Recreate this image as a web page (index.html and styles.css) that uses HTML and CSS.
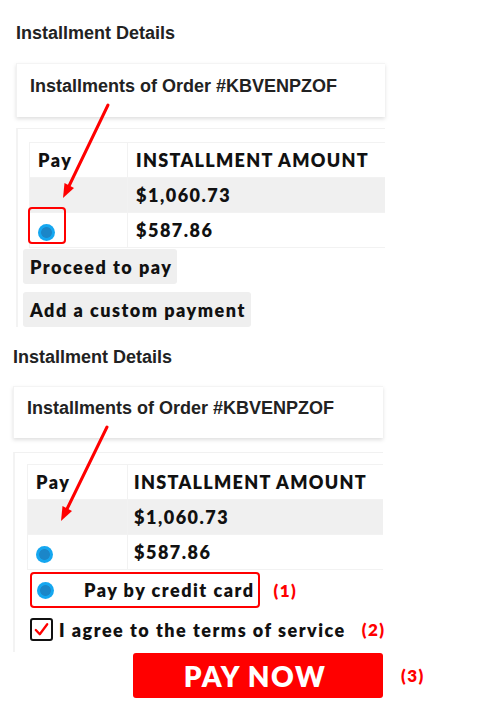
FILE: index.html
```html
<!DOCTYPE html>
<html lang="en">
<head>
<meta charset="utf-8">
<title>Installment Details</title>
<link rel="stylesheet" href="styles.css">
</head>
<body>
<div class="page">
  <section class="block block-a">
    <h2 class="title">Installment Details</h2>
    <div class="card"><h3 class="card-title">Installments of Order #KBVENPZOF</h3></div>
    <div class="panel">
      <table class="inst">
        <thead>
          <tr><th class="c-pay">Pay</th><th class="c-amt">INSTALLMENT AMOUNT</th></tr>
        </thead>
        <tbody>
          <tr class="paid"><td class="c-pay"></td><td class="c-amt">$1,060.73</td></tr>
          <tr><td class="c-pay"><span class="radio"></span><span class="hl"></span></td><td class="c-amt">$587.86</td></tr>
        </tbody>
      </table>
      <div class="btns">
        <button class="btn">Proceed to pay</button>
        <button class="btn">Add a custom payment</button>
      </div>
    </div>
  </section>

  <section class="block block-b">
    <h2 class="title">Installment Details</h2>
    <div class="card"><h3 class="card-title">Installments of Order #KBVENPZOF</h3></div>
    <div class="panel">
      <table class="inst">
        <thead>
          <tr><th class="c-pay">Pay</th><th class="c-amt">INSTALLMENT AMOUNT</th></tr>
        </thead>
        <tbody>
          <tr class="paid"><td class="c-pay"></td><td class="c-amt">$1,060.73</td></tr>
          <tr><td class="c-pay"><span class="radio"></span></td><td class="c-amt">$587.86</td></tr>
        </tbody>
      </table>
      <div class="opt-row">
        <div class="method"><span class="radio"></span><span class="method-label">Pay by credit card</span></div>
        <span class="note">(1)</span>
      </div>
      <div class="agree-row">
        <span class="check"><svg viewBox="0 0 20 20" width="19" height="19"><path d="M4 10.5 L8.2 15 L16 4.5" fill="none" stroke="#f00" stroke-width="2.4" stroke-linecap="round" stroke-linejoin="round"/></svg></span>
        <span class="agree-label">I agree to the terms of service</span>
        <span class="note note-2">(2)</span>
      </div>
    </div>
    <div class="paynow-row">
      <button class="paynow">PAY NOW</button>
      <span class="note note-3">(3)</span>
    </div>
  </section>

  <svg class="arrows" width="484" height="717" viewBox="0 0 484 717">
    <line x1="108" y1="105" x2="69" y2="186" stroke="#f00" stroke-width="3" stroke-linecap="round"/>
    <polygon points="63,198 74,188 64.5,183" fill="#f00"/>
    <line x1="107" y1="427" x2="67" y2="509" stroke="#f00" stroke-width="3" stroke-linecap="round"/>
    <polygon points="61,521 72,511 62.5,506" fill="#f00"/>
  </svg>
</div>
</body>
</html>
```

FILE: styles.css
```css
html, body {
  margin: 0;
  padding: 0;
  background: #fff;
}

.page {
  position: relative;
  width: 484px;
  height: 717px;
  overflow: hidden;
  padding-top: 22px;
  box-sizing: border-box;
}

.block {
  display: flex;
  flex-direction: column;
  align-items: flex-start;
}

.block-a {
  padding-left: 16px;
}

.block-b {
  padding-left: 13px;
  margin-top: 19px;
}

.title {
  margin: 0;
  font-family: "Liberation Sans", Arial, sans-serif;
  font-weight: 700;
  font-size: 18px;
  line-height: 22px;
  color: #222;
}

.card {
  width: 369px;
  box-sizing: border-box;
  margin-top: 19px;
  padding: 11px 13px 20px;
  background: #fff;
  border-top: 1px solid #f4f4f4;
  border-left: 1px solid #f2f2f2;
  box-shadow: 0 2px 4px rgba(0, 0, 0, 0.13);
}

.block-b .card {
  width: 370px;
  margin-top: 18px;
  padding: 10px 13px 19px;
}

.card-title {
  margin: 0;
  font-family: "Liberation Sans", Arial, sans-serif;
  font-weight: 700;
  font-size: 18px;
  line-height: 22px;
  color: #222;
}

.panel {
  width: 369px;
  box-sizing: border-box;
  margin-top: 11px;
  padding: 13px 0 0 5px;
  border-top: 1px solid #f1f1f1;
  border-left: 2px solid #f3f3f3;
  background: #fff;
}

.block-b .panel {
  width: 370px;
  margin-top: 14px;
  padding: 11px 0 11px 12px;
}

.inst {
  border-collapse: collapse;
  margin-left: 6px;
  width: calc(100% - 6px);
  font-family: Lato, "Open Sans", sans-serif;
  font-weight: 800;
  font-size: 18px;
  letter-spacing: 1.5px;
  color: #111;
}

.block-b .inst {
  margin-left: 0;
  width: 100%;
}

.inst th,
.inst td {
  height: 34px;
  padding: 0;
  text-align: left;
  vertical-align: middle;
  border: 1px solid #f2f2f2;
  border-right: none;
  font-weight: 800;
  white-space: nowrap;
}

.inst th.c-amt {
  letter-spacing: 1.3px;
}

.inst .c-pay {
  width: 98px;
  padding-left: 8px;
  box-sizing: border-box;
  position: relative;
}

.block-b .inst .c-pay {
  width: 100px;
}

.inst .c-amt {
  padding-left: 8px;
}

.block-b .inst .c-amt {
  padding-left: 6px;
}

.paid td {
  background: #f0f0f0;
}

.radio {
  display: inline-block;
  flex-shrink: 0;
  width: 17px;
  height: 17px;
  border-radius: 50%;
  background: radial-gradient(circle, #1b86c8 0 5px, #15a7f0 5.8px);
  vertical-align: middle;
}

.hl {
  position: absolute;
  left: -2px;
  top: -6px;
  width: 38px;
  height: 37px;
  box-sizing: border-box;
  border: 2.5px solid #f00;
  border-radius: 4px;
}

.btns {
  display: flex;
  flex-direction: column;
  align-items: flex-start;
  gap: 8px;
  margin-top: 1px;
}

.btn {
  height: 35px;
  padding: 0 5px 0 7px;
  border: none;
  border-radius: 3px;
  background: #efefef;
  font-family: Lato, "Open Sans", sans-serif;
  font-weight: 800;
  font-size: 18px;
  letter-spacing: 1.5px;
  color: #111;
  text-align: left;
  white-space: nowrap;
}

.opt-row {
  display: flex;
  align-items: center;
  gap: 14px;
  margin-top: 2px;
  margin-left: 3px;
}

.method {
  display: flex;
  align-items: center;
  height: 36px;
  box-sizing: border-box;
  padding: 0 3px 0 5px;
  border: 2.5px solid #f00;
  border-radius: 4px;
}

.method-label {
  margin-left: 30px;
  font-family: Lato, "Open Sans", sans-serif;
  font-weight: 800;
  font-size: 18px;
  letter-spacing: 1.5px;
  color: #111;
  white-space: nowrap;
}

.note {
  flex-shrink: 0;
  font-family: Lato, "Open Sans", sans-serif;
  font-weight: 800;
  font-size: 17px;
  letter-spacing: 1.4px;
  color: #f00;
  white-space: nowrap;
}

.agree-row {
  display: flex;
  align-items: center;
  margin-top: 10px;
  margin-left: 3px;
  height: 23px;
  width: max-content;
}

.check {
  display: flex;
  flex-shrink: 0;
  align-items: center;
  justify-content: center;
  width: 23px;
  height: 23px;
  box-sizing: border-box;
  border: 2.5px solid #111;
  border-radius: 3px;
}

.agree-label {
  margin-left: 6px;
  font-family: Lato, "Open Sans", sans-serif;
  font-weight: 800;
  font-size: 18px;
  letter-spacing: 1.5px;
  color: #111;
  white-space: nowrap;
}

.note-2 {
  margin-left: 16px;
}

.paynow-row {
  display: flex;
  align-items: center;
  margin-top: 1px;
  margin-left: 120px;
  gap: 18px;
}

.paynow {
  width: 250px;
  height: 45px;
  border: none;
  border-radius: 3px;
  background: #f00;
  color: #fff;
  font-family: Lato, "Open Sans", sans-serif;
  font-weight: 800;
  font-size: 28px;
  letter-spacing: 1.5px;
  padding: 0 6px 0 0;
}

.arrows {
  position: absolute;
  left: 0;
  top: 0;
  pointer-events: none;
}
```
